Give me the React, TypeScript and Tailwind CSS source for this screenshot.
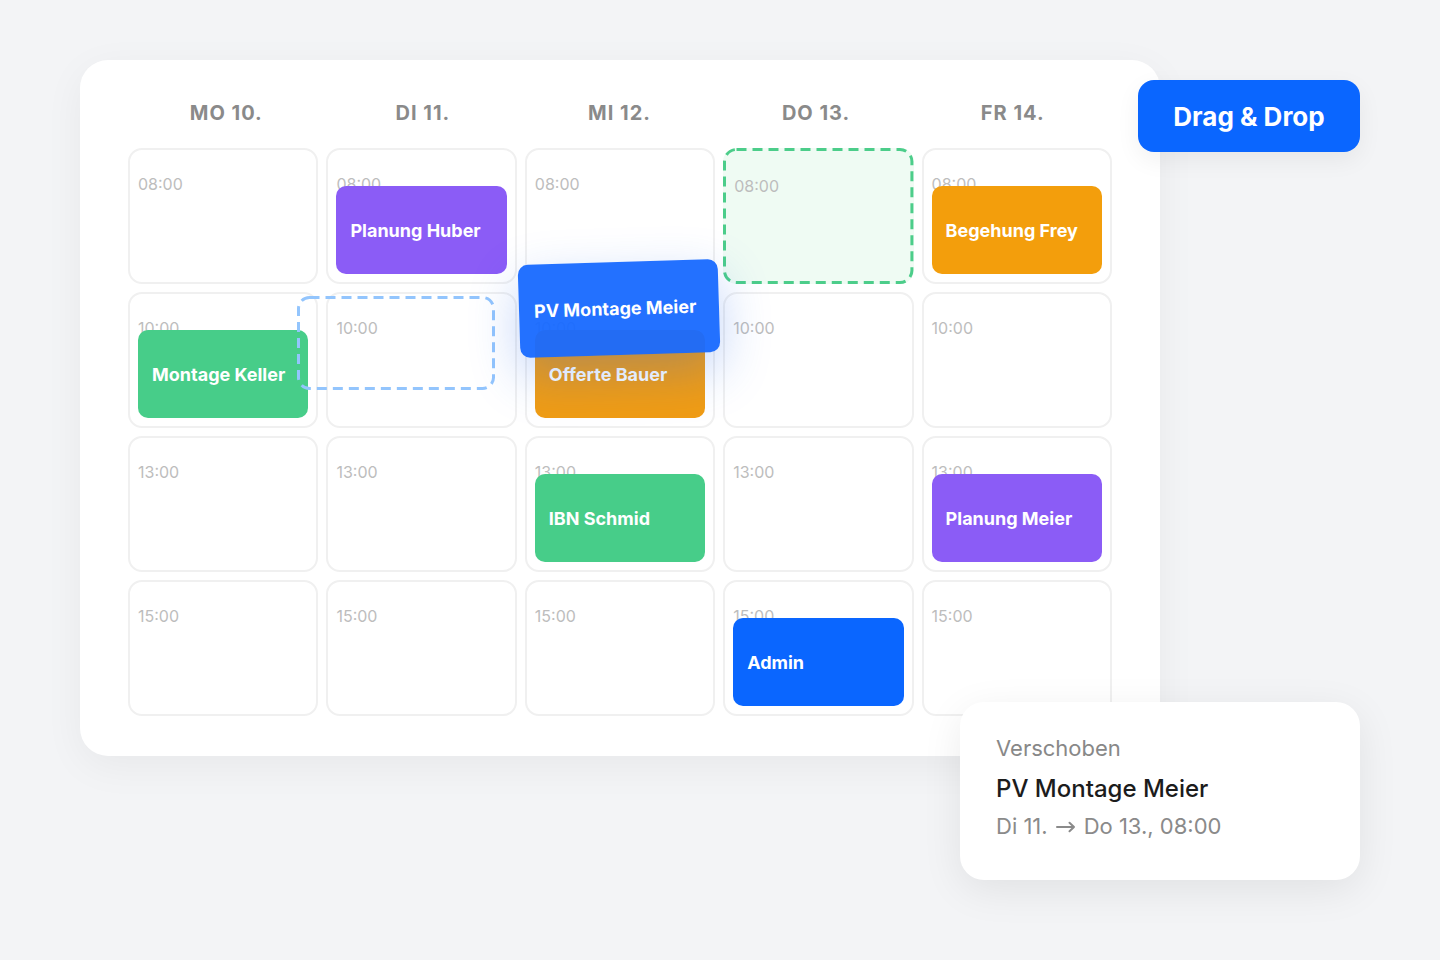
import React from "react";

type Ev = { title: string; color: string };

const days = ["MO 10.", "DI 11.", "MI 12.", "DO 13.", "FR 14."];
const times = ["08:00", "10:00", "13:00", "15:00"];

// events keyed by `${row}-${col}`
const events: Record<string, Ev> = {
  "0-1": { title: "Planung Huber", color: "bg-[#8b5cf6]" },
  "0-4": { title: "Begehung Frey", color: "bg-[#f39e0c]" },
  "1-0": { title: "Montage Keller", color: "bg-[#47cd89]" },
  "1-2": { title: "Offerte Bauer", color: "bg-[#f09c14]" },
  "2-2": { title: "IBN Schmid", color: "bg-[#47cd89]" },
  "2-4": { title: "Planung Meier", color: "bg-[#8b5cf6]" },
  "3-3": { title: "Admin", color: "bg-[#0a66ff]" },
};

function DashedOutline({ stroke, radius }: { stroke: string; radius: number }) {
  return (
    <svg className="pointer-events-none absolute inset-0 h-full w-full overflow-visible">
      <rect
        x="1.5"
        y="1.5"
        rx={radius}
        ry={radius}
        className="h-[calc(100%-3px)] w-[calc(100%-3px)]"
        fill="none"
        stroke={stroke}
        strokeWidth="3"
        strokeDasharray="10 6"
      />
    </svg>
  );
}

function Cell({ row, col }: { row: number; col: number }) {
  const ev = events[`${row}-${col}`];
  const isTarget = row === 0 && col === 3;
  return (
    <div
      className={
        isTarget
          ? "relative h-[136px] rounded-[14px] bg-[#effbf3] pl-[11px] pt-[28px]"
          : "relative h-[136px] rounded-[14px] border-2 border-[#f0f0f0] bg-white pl-[8px] pt-[24px]"
      }
    >
      {isTarget ? <DashedOutline stroke="#4ccd8a" radius={12} /> : null}
      <div className="text-[16px] leading-[20px] text-[#bdbdbd]">{times[row]}</div>
      {ev ? (
        <div
          className={`absolute left-[8px] right-[8px] top-[36px] flex h-[88px] items-center rounded-[10px] pl-[14px] text-[18px] font-bold text-white ${ev.color}`}
        >
          {ev.title}
        </div>
      ) : null}
    </div>
  );
}

export default function App() {
  return (
    <div
      className="relative h-[960px] w-[1440px] overflow-hidden bg-[#f3f4f6] pl-[80px] pt-[60px]"
      style={{ fontFamily: "Inter, 'Noto Sans', sans-serif" }}
    >
      <div className="w-[1080px] rounded-[28px] bg-white px-12 pb-10 pt-10 shadow-[0_10px_40px_rgba(0,0,0,0.05)]">
        <div className="grid grid-cols-5 gap-2 pl-[4px] pr-[5px]">
          {days.map((d) => (
            <div
              key={d}
              className="h-[24px] text-center text-[20px] font-bold leading-[26px] tracking-[0.05em] text-[#8a8a8a]"
            >
              {d}
            </div>
          ))}
        </div>

        <div className="relative mt-6 grid grid-cols-5 gap-2">
          {times.map((_, row) =>
            days.map((_, col) => <Cell key={`${row}-${col}`} row={row} col={col} />)
          )}

          {/* origin slot */}
          <div className="absolute left-[169px] top-[148px] h-[94px] w-[198px]">
            <DashedOutline stroke="#93c5fd" radius={11} />
          </div>

          {/* dragged card */}
          <div className="absolute left-[391px] top-[114px] flex h-[93px] w-[200px] -rotate-[1.8deg] items-center rounded-[10px] bg-[#1769ff]/95 pl-[15px] text-[18px] font-bold text-white shadow-[0_18px_50px_rgba(37,99,235,0.28)]">
            PV Montage Meier
          </div>
        </div>
      </div>

      <div className="absolute left-[1138px] top-[80px] flex h-[72px] w-[222px] items-center justify-center rounded-[16px] bg-[#0a66ff] text-[26px] font-bold text-white shadow-[0_8px_24px_rgba(0,0,0,0.06)]">
        Drag &amp; Drop
      </div>

      <div className="absolute left-[960px] top-[702px] h-[178px] w-[400px] rounded-[24px] bg-white pl-9 pt-8 shadow-[0_10px_40px_rgba(0,0,0,0.08)]">
        <div className="text-[22px] leading-[28px] text-[#888888]">Verschoben</div>
        <div className="mt-[11px] text-[24px] font-medium leading-[32px] text-[#1c1c1c]">
          PV Montage Meier
        </div>
        <div className="mt-[7px] flex items-center text-[22px] leading-[28px] text-[#8a8a8a]">
          <span>Di 11.</span>
          <svg width="20" height="12" viewBox="0 0 20 12" className="mx-[8px] mt-[1px]">
            <path
              d="M1 6h17M13.5 1.8L18 6l-4.5 4.2"
              fill="none"
              stroke="#8a8a8a"
              strokeWidth="2"
              strokeLinecap="round"
              strokeLinejoin="round"
            />
          </svg>
          <span>Do 13., 08:00</span>
        </div>
      </div>
    </div>
  );
}
